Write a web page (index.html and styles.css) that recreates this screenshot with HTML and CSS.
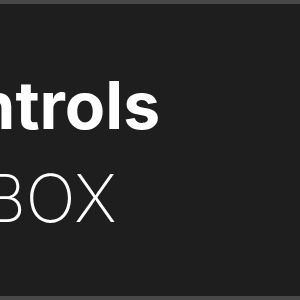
FILE: index.html
```html
<!DOCTYPE html>
<html lang="en">
<head>
  <meta charset="UTF-8">
  <title>Controls</title>
  <link rel="stylesheet" href="styles.css">
</head>
<body>
  <div class="panel">
    <div class="heading">
      <h1 class="title">Controls</h1>
      <p class="device">XBOX</p>
    </div>
  </div>
</body>
</html>
```

FILE: styles.css
```css
* {
  margin: 0;
  padding: 0;
  box-sizing: border-box;
}

html, body {
  width: 300px;
  height: 300px;
  overflow: hidden;
}

body {
  background-color: #1e1e1e;
  font-family: Inter, "Noto Sans", sans-serif;
  color: #ffffff;
}

/* Panel with lighter edges */
.panel {
  height: 300px;
  border-top: 4px solid #484848;
  border-bottom: 4px solid #484848;
  padding-top: 61px;
}

.heading {
  white-space: nowrap;
}

.title {
  font-size: 66px;
  font-weight: 700;
  line-height: 80px;
  margin-left: -115px;
}

.device {
  font-size: 66px;
  font-weight: 200;
  line-height: 80px;
  margin-top: 13px;
  margin-left: -59px;
}
```
